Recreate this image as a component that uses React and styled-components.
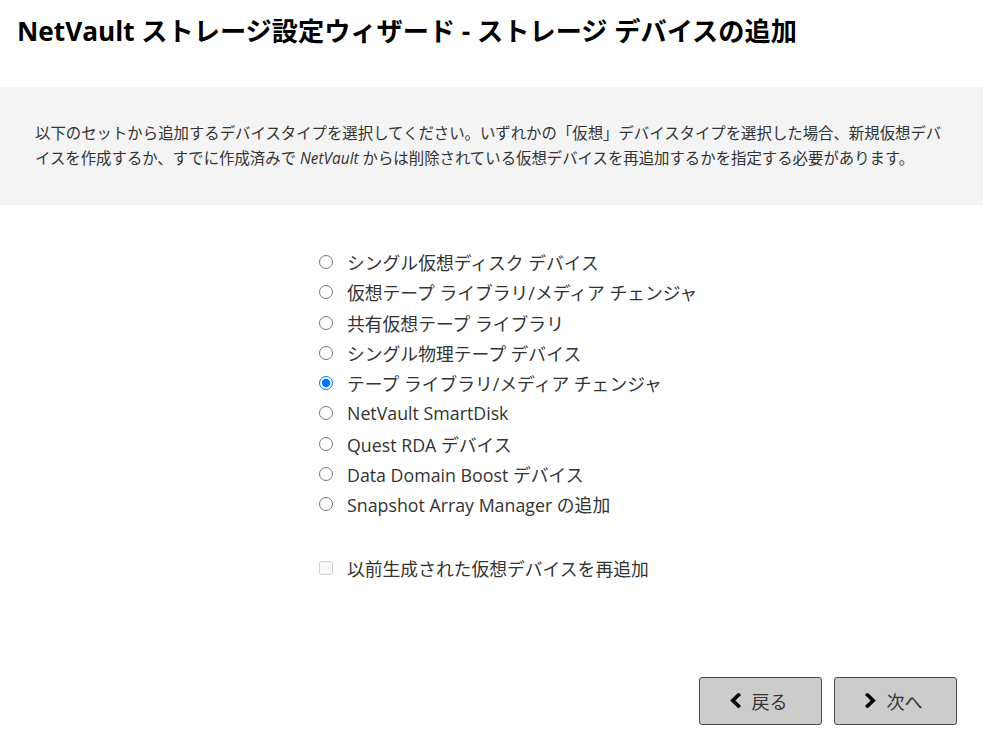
import React, { useState } from "react";
import styled, { createGlobalStyle } from "styled-components";

const GlobalStyle = createGlobalStyle`
  body {
    margin: 0;
    background: #fff;
    font-family: "Open Sans", "Noto Sans CJK JP", sans-serif;
    color: #333;
  }
`;

const DEVICE_TYPES = [
  "シングル仮想ディスク デバイス",
  "仮想テープ ライブラリ/メディア チェンジャ",
  "共有仮想テープ ライブラリ",
  "シングル物理テープ デバイス",
  "テープ ライブラリ/メディア チェンジャ",
  "NetVault SmartDisk",
  "Quest RDA デバイス",
  "Data Domain Boost デバイス",
  "Snapshot Array Manager の追加",
];

const App = () => {
  const [selected, setSelected] = useState(4);

  return (
    <>
      <GlobalStyle />
      <Page>
        <Title>NetVault ストレージ設定ウィザード - ストレージ デバイスの追加</Title>

        <InfoBand>
          <InfoText>
            以下のセットから追加するデバイスタイプを選択してください。いずれかの「仮想」デバイスタイプを選択した場合、新規仮想デバイスを作成するか、すでに作成済みで <em>NetVault</em> からは削除されている仮想デバイスを再追加するかを指定する必要があります。
          </InfoText>
        </InfoBand>

        <OptionList>
          {DEVICE_TYPES.map((label, i) => (
            <OptionRow key={label}>
              <Radio
                type="radio"
                name="deviceType"
                checked={selected === i}
                onChange={() => setSelected(i)}
              />
              <OptionLabel>{label}</OptionLabel>
            </OptionRow>
          ))}
          <CheckRow>
            <Check type="checkbox" disabled />
            <OptionLabel>以前生成された仮想デバイスを再追加</OptionLabel>
          </CheckRow>
        </OptionList>

        <Footer>
          <NavButton>
            <Chevron viewBox="0 0 11 15">
              <path d="M8.5 2 L2.8 7.5 L8.5 13" />
            </Chevron>
            戻る
          </NavButton>
          <NavButton>
            <Chevron viewBox="0 0 11 15">
              <path d="M2.5 2 L8.2 7.5 L2.5 13" />
            </Chevron>
            次へ
          </NavButton>
        </Footer>
      </Page>
    </>
  );
};

export default App;

const Page = styled.main`
  width: 983px;
  display: flex;
  flex-direction: column;
`;

const Title = styled.h1`
  margin: 0;
  padding: 14px 17px 0;
  height: 87px;
  box-sizing: border-box;
  font-size: 26.2px;
  line-height: 34px;
  font-weight: 700;
  color: #000;
  white-space: nowrap;
`;

const InfoBand = styled.section`
  background: #f4f4f4;
  padding: 34px 40px 34px 35px;
`;

const InfoText = styled.p`
  margin: 0;
  font-size: 15.4px;
  line-height: 25px;
  color: #333;

  em {
    font-style: italic;
  }
`;

const OptionList = styled.div`
  display: flex;
  flex-direction: column;
  padding-left: 319px;
  margin-top: 42px;
`;

const OptionRow = styled.label`
  display: flex;
  align-items: center;
  height: 30.25px;
  gap: 14px;
`;

const CheckRow = styled(OptionRow)`
  margin-top: 34px;
`;

const Radio = styled.input`
  margin: 0;
  width: 14px;
  height: 14px;
`;

const Check = styled.input`
  margin: 0;
  width: 14px;
  height: 14px;
`;

const OptionLabel = styled.span`
  font-size: 17.8px;
  color: #333;
  white-space: nowrap;
`;

const Footer = styled.div`
  display: flex;
  justify-content: flex-end;
  gap: 12px;
  padding-right: 26px;
  margin-top: 93px;
`;

const NavButton = styled.button`
  width: 123px;
  height: 48px;
  display: flex;
  align-items: center;
  justify-content: center;
  gap: 11px;
  background: #cccccc;
  border: 1px solid #4a4a4a;
  border-radius: 3px;
  font-family: "Open Sans", "Noto Sans CJK JP", sans-serif;
  font-size: 18px;
  color: #333;
  padding: 0 4px 0 0;
`;

const Chevron = styled.svg`
  width: 11px;
  height: 15px;
  fill: none;
  stroke: #000;
  stroke-width: 3.6;
  stroke-linecap: square;
`;
